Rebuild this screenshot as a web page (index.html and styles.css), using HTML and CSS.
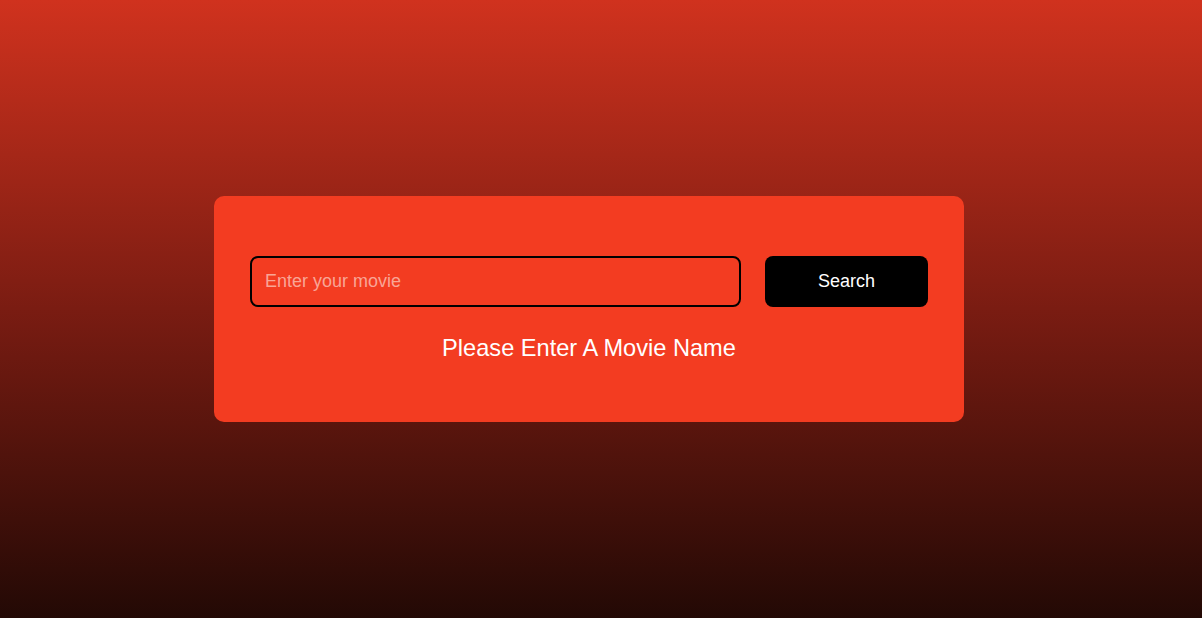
FILE: index.html
```html
<!DOCTYPE html>
<html lang="en">
<head>
<meta charset="utf-8">
<title>Movie Search</title>
<link rel="stylesheet" href="styles.css">
</head>
<body>
<div class="page">
  <div class="card">
    <div class="search-row">
      <input class="search-input" type="text" placeholder="Enter your movie">
      <button class="search-btn">Search</button>
    </div>
    <div class="message">Please Enter A Movie Name</div>
  </div>
</div>
</body>
</html>
```
FILE: styles.css
```css
* { box-sizing: border-box; }
html, body { margin: 0; padding: 0; height: 100%; }
body {
  font-family: "Liberation Sans", Arial, sans-serif;
  background: linear-gradient(to bottom, #d0321e 0%, #7a1c12 50%, #230905 100%);
  min-height: 618px;
}
.page {
  height: 618px;
  display: flex;
  justify-content: center;
  padding-top: 196px;
  padding-right: 24px;
}
.card {
  width: 750px;
  height: 226px;
  background: #f33c21;
  border-radius: 10px;
  padding: 60px 36px 0;
}
.search-row {
  display: flex;
  gap: 24px;
}
.search-input {
  width: 491px;
  height: 51px;
  border: 2px solid #000;
  border-radius: 8px;
  background: transparent;
  padding: 0 13px;
  font-family: "Liberation Sans", Arial, sans-serif;
  font-size: 18px;
  color: #fff;
  outline: none;
}
.search-input::placeholder { color: #f9a596; opacity: 1; }
.search-btn {
  width: 163px;
  height: 51px;
  border: none;
  border-radius: 8px;
  background: #000;
  color: #fff;
  font-family: "Liberation Sans", Arial, sans-serif;
  font-size: 18px;
}
.message {
  margin-top: 27px;
  text-align: center;
  color: #fff;
  font-size: 23.6px;
  line-height: 28px;
}
```
